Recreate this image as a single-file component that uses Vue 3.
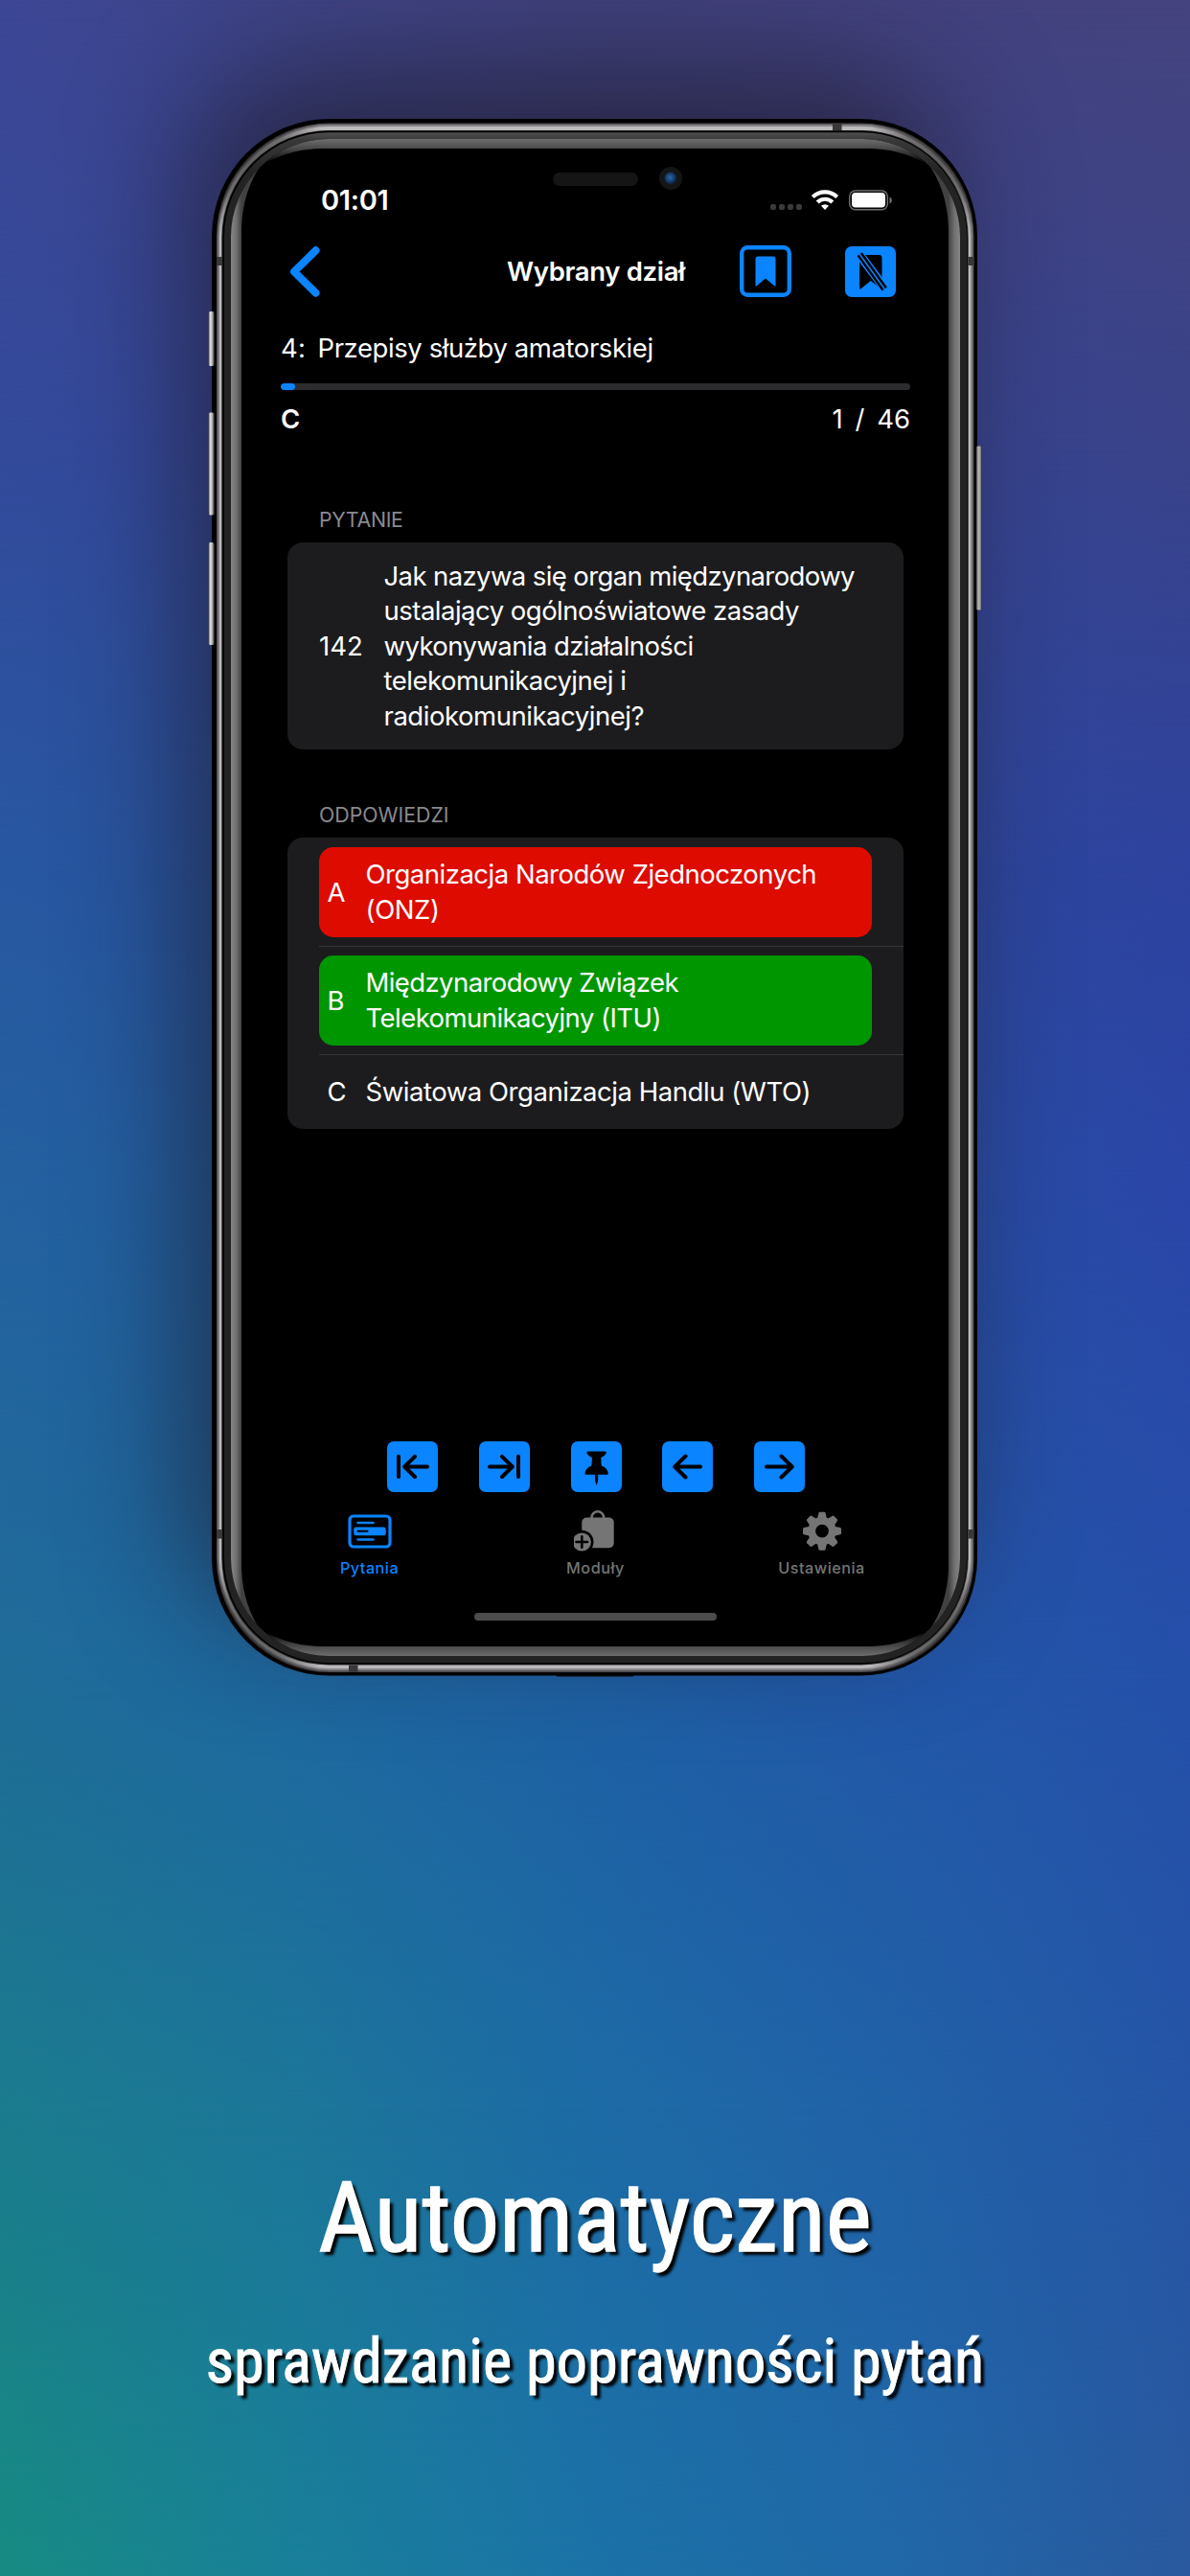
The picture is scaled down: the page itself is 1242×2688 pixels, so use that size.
<script setup>
const backdrop = [
  { y: 0, h: 1, stops: ['#3d4796', '#3f4486', '#40417c', '#43427f', '#44437f'] },
  { y: 0, h: 450, stops: ['#344a9b', '#35479a', '#354593', '#374491', '#3a4389'] },
  { y: 450, h: 450, stops: ['#2857a1', '#28539f', '#2a4b9e', '#2d479c', '#2e439f'] },
  { y: 900, h: 350, stops: ['#2461a0', '#215fa2', '#2458a2', '#284ea3', '#2a46a8'] },
  { y: 1250, h: 500, stops: ['#1f6c98', '#1e68a0', '#1e60a4', '#2257a8', '#2550aa'] },
  { y: 1750, h: 450, stops: ['#1b7b8e', '#1c7699', '#1d6ba6', '#2162a7', '#2555a6'] },
  { y: 2200, h: 488, stops: ['#178b82', '#19809a', '#1b72a7', '#2068a8', '#2a599e'] },
]

const question = [
  { text: 'Jak nazywa się organ międzynarodowy', track: -0.61 },
  { text: 'ustalający ogólnoświatowe zasady', track: -0.51 },
  { text: 'wykonywania działalności', track: -0.58 },
  { text: 'telekomunikacyjnej i', track: -0.5 },
  { text: 'radiokomunikacyjnej?', track: -0.46 },
]

const answers = [
  {
    key: 'A',
    state: 'wrong',
    lines: [
      { text: 'Organizacja Narodów Zjednoczonych', track: -0.49 },
      { text: '(ONZ)', track: -0.4 },
    ],
  },
  {
    key: 'B',
    state: 'right',
    lines: [
      { text: 'Międzynarodowy Związek', track: -0.59 },
      { text: 'Telekomunikacyjny (ITU)', track: -0.55 },
    ],
  },
  {
    key: 'C',
    state: 'idle',
    lines: [{ text: 'Światowa Organizacja Handlu (WTO)', track: -0.46 }],
  },
]

const track = (v) => ({ letterSpacing: v + 'px' })
const teeth = [0, 45, 90, 135, 180, 225, 270, 315]
</script>

<template>
  <div class="stage">
    <svg class="backdrop" viewBox="0 0 1242 2688" aria-hidden="true">
      <defs>
        <template v-for="(row, i) in backdrop" :key="'g' + i">
          <linearGradient :id="'row' + i" x1="0" x2="1" y1="0" y2="0">
            <stop v-for="(c, j) in row.stops" :key="j" :offset="j / 4" :stop-color="c" />
          </linearGradient>
          <linearGradient :id="'fade' + i" gradientUnits="userSpaceOnUse" x1="0" x2="0" :y1="row.y" :y2="row.y + row.h">
            <stop offset="0" stop-color="#fff" :stop-opacity="i ? 0 : 1" />
            <stop offset="1" stop-color="#fff" />
          </linearGradient>
          <mask :id="'mask' + i" maskUnits="userSpaceOnUse" x="0" y="0" width="1242" height="2688">
            <rect :y="row.y" width="1242" :height="2688 - row.y" :fill="`url(#fade${i})`" />
          </mask>
        </template>
      </defs>
      <rect
        v-for="(row, i) in backdrop"
        :key="i"
        :y="row.y"
        width="1242"
        :height="2688 - row.y"
        :fill="`url(#row${i})`"
        :mask="`url(#mask${i})`"
      />
    </svg>

    <div class="shadow"></div>

    <svg class="frame" viewBox="0 0 1242 1780" aria-hidden="true">
      <defs>
        <linearGradient id="keyL" x1="0" x2="1"><stop offset="0" stop-color="#444" /><stop offset=".3" stop-color="#ddd" /><stop offset=".6" stop-color="#bbb" /><stop offset="1" stop-color="#333" /></linearGradient>
        <linearGradient id="keyR" x1="0" x2="1"><stop offset="0" stop-color="#222" /><stop offset=".4" stop-color="#bbb" /><stop offset=".75" stop-color="#999" /><stop offset="1" stop-color="#222" /></linearGradient>
        <linearGradient id="sideL" gradientUnits="userSpaceOnUse" x1="241" x2="252" y1="0" y2="0"><stop offset="0" stop-color="#868686" /><stop offset=".5" stop-color="#707070" /><stop offset="1" stop-color="#414141" /></linearGradient>
        <linearGradient id="sideR" gradientUnits="userSpaceOnUse" x1="990" x2="1002" y1="0" y2="0"><stop offset="0" stop-color="#414141" /><stop offset=".5" stop-color="#707070" /><stop offset="1" stop-color="#868686" /></linearGradient>
        <linearGradient id="capT" gradientUnits="userSpaceOnUse" x1="0" x2="0" y1="145" y2="171"><stop offset="0" stop-color="#6e6e6e" /><stop offset=".38" stop-color="#4a4a4a" /><stop offset="1" stop-color="#000" /></linearGradient>
        <linearGradient id="capB" gradientUnits="userSpaceOnUse" x1="0" x2="0" y1="1702" y2="1728"><stop offset="0" stop-color="#000" /><stop offset=".62" stop-color="#4a4a4a" /><stop offset="1" stop-color="#6e6e6e" /></linearGradient>
        <linearGradient id="rim" gradientUnits="userSpaceOnUse" x1="0" x2="0" y1="138" y2="240"><stop offset="0" stop-color="#505050" /><stop offset=".08" stop-color="#383838" /><stop offset=".4" stop-color="#242424" /><stop offset="1" stop-color="#232323" /></linearGradient>
        <radialGradient id="dim"><stop offset="0" stop-color="#000" stop-opacity=".5" /><stop offset=".5" stop-color="#000" stop-opacity=".4" /><stop offset="1" stop-color="#000" stop-opacity="0" /></radialGradient>
        <radialGradient id="lens" cx=".45" cy=".45" r=".6"><stop offset="0" stop-color="#2a6aa8" /><stop offset=".55" stop-color="#173d6d" /><stop offset="1" stop-color="#08152c" /></radialGradient>
        <clipPath id="glass"><rect x="241" y="145" width="761" height="1583" rx="102" /></clipPath>
        <clipPath id="body"><rect x="221" y="124" width="799" height="1624.500" rx="123" /></clipPath>
      </defs>
      <rect x="580" y="1745" width="82" height="4.500" rx="2" fill="#111" />
      <rect x="221" y="124" width="799" height="1624.500" rx="123" fill="#000" />
      <rect x="217.500" y="325" width="6.200" height="57" rx="2" fill="url(#keyL)" />
      <rect x="217.500" y="430.500" width="6.200" height="107" rx="2" fill="url(#keyL)" />
      <rect x="217.500" y="566" width="6.200" height="107" rx="2" fill="url(#keyL)" />
      <rect x="1018.500" y="465.500" width="6.300" height="171" rx="2" fill="url(#keyR)" />
      <rect x="226" y="128.500" width="790.500" height="1616.500" rx="118" fill="#504e50" />
      <rect x="227.500" y="130" width="787.500" height="1613" rx="116" fill="#858385" />
      <rect x="229" y="132" width="784" height="1609" rx="114" fill="#bcb9bc" />
      <g clip-path="url(#body)" fill="url(#dim)">
        <circle cx="255" cy="164" r="85" />
        <circle cx="987" cy="164" r="85" />
        <circle cx="255" cy="1710" r="85" />
        <circle cx="987" cy="1710" r="85" />
      </g>
      <rect x="231.300" y="136" width="779.400" height="1601.500" rx="112" fill="#2a2a2a" />
      <rect x="232.300" y="136.500" width="777.400" height="1600" rx="111" fill="#000" />
      <rect x="234" y="138.300" width="775" height="1596.700" rx="109" fill="url(#rim)" />
      <g fill="#393738">
        <rect x="226" y="268" width="6" height="9" />
        <rect x="226" y="1596" width="6" height="9.500" />
        <rect x="1010.500" y="268" width="6" height="9" />
        <rect x="1010.500" y="1596" width="6" height="9.500" />
        <rect x="869" y="128.500" width="9.500" height="7.500" />
        <rect x="364" y="1737.500" width="9.500" height="7.500" />
      </g>
      <g clip-path="url(#glass)">
        <rect x="241" y="145" width="761" height="1583" fill="#000" />
        <path fill="url(#capT)" d="M250 130H992L966 170C945 160 928 155 905 155H338C315 155 297 160 276 170z" />
        <path fill="url(#capB)" d="M250 1743H992L966 1703C945 1713 928 1718 905 1718H338C315 1718 297 1713 276 1703z" />
        <path fill="url(#sideL)" d="M230 120H300L285 157C262 180 252 210 252 242V1632C252 1664 262 1694 285 1717L300 1750H230z" />
        <path fill="url(#sideR)" d="M1012 120H945L957 157C980 180 990 210 990 242V1632C990 1664 980 1694 957 1717L945 1750H1012z" />
      </g>
      <rect x="577" y="180" width="89" height="14" rx="7" fill="#151515" />
      <circle cx="700" cy="186" r="12" fill="#151515" />
      <circle cx="700" cy="186" r="6.500" fill="url(#lens)" />
    </svg>

    <main class="screen">
      <div class="status">
        <span class="time">01:01</span>
        <svg width="125" height="22" viewBox="806 198 125 22">
          <g fill="#3a3a3c"><rect x="804" y="213" width="6" height="6" rx="2" /><rect x="813" y="213" width="6" height="6" rx="2" /><rect x="822" y="213" width="6" height="6" rx="2" /><rect x="831" y="213" width="6" height="6" rx="2" /></g>
          <g fill="none" stroke="#fff" stroke-width="4.200"><path d="M848.300 205.600A18.200 18.200 0 0 1 873.700 205.600" /><path d="M853.200 211A11 11 0 0 1 868.800 211" /></g>
          <path fill="#fff" d="M857 214.700a6 6 0 0 1 8 0L861 218.900z" />
          <rect x="886.700" y="198.900" width="39.600" height="19.800" rx="6" fill="none" stroke="#6e6e70" stroke-width="1.500" />
          <rect x="889" y="201" width="35" height="15.500" rx="3.800" fill="#fff" />
          <path fill="#7a7a7c" d="M928.500 205.500c3 1.500 3 5.500 0 7z" />
        </svg>
      </div>

      <header class="bar">
        <div class="side back">
          <svg width="32" height="53" viewBox="0 0 32 53"><path d="M27.500 4.300L5 26.500 27.500 48.700" fill="none" stroke="#0b84ff" stroke-width="8" stroke-linecap="round" stroke-linejoin="round" /></svg>
        </div>
        <h1>Wybrany dział</h1>
        <div class="side actions">
          <svg width="54" height="54" viewBox="0 0 54 54">
            <rect x="2.200" y="2.200" width="49.600" height="49.600" rx="6" fill="none" stroke="#0b84ff" stroke-width="4.400" />
            <path fill="#0b84ff" d="M16.500 14.500a3 3 0 0 1 3-3h15a3 3 0 0 1 3 3V42q0 1-1 .4L27 34.500l-9.500 7.900q-1 .6-1-.4z" />
          </svg>
          <svg width="53" height="53" viewBox="0 0 53 53">
            <rect width="53" height="53" rx="7" fill="#0b84ff" />
            <path fill="#000" d="M15 12a3 3 0 0 1 3-3h17.500a3 3 0 0 1 3 3V43.500q0 1.500-1.200.5L26.800 36l-10.500 8.500q-1.300.8-1.300-1z" />
            <path d="M13.500 6.500L43 46" stroke="#0b84ff" stroke-width="9.500" />
            <path d="M15.200 8.200L41.200 44.700" stroke="#000" stroke-width="6.500" />
            <path d="M14 6.500L42.500 46.500" stroke="#0b84ff" stroke-width="1.500" />
          </svg>
        </div>
      </header>

      <section class="summary">
        <p class="chapter"><span class="num">4:</span><span>Przepisy służby amatorskiej</span></p>
        <div class="progress"><i></i></div>
        <p class="count"><b>C</b><span>1 / 46</span></p>
      </section>

      <h2 class="label first">PYTANIE</h2>
      <section class="card question">
        <span class="qnum">142</span>
        <p><span v-for="l in question" :key="l.text" class="line" :style="track(l.track)">{{ l.text }}</span></p>
      </section>

      <h2 class="label second">ODPOWIEDZI</h2>
      <section class="card answers">
        <div v-for="a in answers" :key="a.key" class="row">
          <div class="answer" :class="a.state">
            <span class="key">{{ a.key }}</span>
            <p><span v-for="l in a.lines" :key="l.text" class="line" :style="track(l.track)">{{ l.text }}</span></p>
          </div>
        </div>
      </section>

      <nav class="tools">
        <svg viewBox="0 0 53 53"><rect width="53" height="53" rx="7" /><path d="M12 15.800V37M42 26.500H18.500M29 15.800L18.300 26.500 29 37" /></svg>
        <svg viewBox="0 0 53 53"><rect width="53" height="53" rx="7" /><path d="M41 15.800V37M11 26.500H34.500M24 15.800L34.700 26.500 24 37" /></svg>
        <svg viewBox="0 0 53 53"><rect width="53" height="53" rx="7" /><path class="solid" d="M18 10.500H35Q37.500 10.500 36.500 12.800Q35 15.500 31.200 17.200L31.800 25.500Q38 27.500 38.700 33.500Q38.700 34.800 37.500 34.800H28.300L28 41.500L26.600 46L25.200 41.500L24.900 34.800H15.700Q14.500 34.800 14.500 33.500Q15.200 27.500 21.400 25.500L22 17.200Q18.200 15.500 16.700 12.800Q15.700 10.500 18 10.500z" /></svg>
        <svg viewBox="0 0 53 53"><rect width="53" height="53" rx="7" /><path d="M40 26.500H13.500M24.500 15.500L13.300 26.500 24.500 37.500" /></svg>
        <svg viewBox="0 0 53 53"><rect width="53" height="53" rx="7" /><path d="M13 26.500H39.500M28.500 15.500L39.700 26.500 28.500 37.500" /></svg>
      </nav>

      <nav class="tabs">
        <div class="tab active">
          <svg width="46" height="46" viewBox="0 0 46 46">
            <rect x="2" y="7" width="42" height="32" rx="4" fill="none" stroke="currentColor" stroke-width="3.200" />
            <path d="M10.500 14H26.500M10.500 31.400H26.500" stroke="currentColor" stroke-width="2.500" stroke-linecap="round" />
            <rect x="6.200" y="18.600" width="33.500" height="8.600" rx="2.500" fill="currentColor" />
            <path d="M10.500 22.800H20.500" stroke="#000" stroke-width="2" stroke-linecap="round" />
          </svg>
          <span>Pytania</span>
        </div>
        <div class="tab">
          <svg width="46" height="46" viewBox="0 0 46 46">
            <path d="M18.500 9.500V8.500a6.300 6.300 0 0 1 12.600 0V9.500" fill="none" stroke="currentColor" stroke-width="2.600" />
            <rect x="8.300" y="8.500" width="33.400" height="31.800" rx="5" fill="currentColor" />
            <circle cx="8.300" cy="34" r="12.200" fill="#000" />
            <circle cx="8.300" cy="34" r="9.600" fill="currentColor" />
            <path d="M2.500 34H14.100M8.300 28.200V39.800" stroke="#000" stroke-width="2.600" stroke-linecap="round" />
          </svg>
          <span>Moduły</span>
        </div>
        <div class="tab">
          <svg width="46" height="46" viewBox="0 0 46 46">
            <g transform="translate(23 22.700)" fill="currentColor">
              <circle r="10.800" fill="none" stroke="currentColor" stroke-width="7.800" />
              <path v-for="t in teeth" :key="t" d="M-5 -12.500L-3.600 -19Q-3.300 -20 -2.300 -20H2.300Q3.300 -20 3.600 -19L5 -12.500z" :transform="`rotate(${t})`" />
            </g>
          </svg>
          <span>Ustawienia</span>
        </div>
      </nav>
      <div class="home"></div>
    </main>

    <footer class="caption">
      <p class="title">Automatyczne</p>
      <p class="sub">sprawdzanie poprawności pytań</p>
    </footer>
  </div>
</template>

<style>
body { margin: 0; background: #2458a2; }
</style>

<style scoped>
.stage {
  position: relative;
  width: 1242px;
  height: 2688px;
  overflow: hidden;
  box-sizing: border-box;
  padding-top: 155px;
  font: 400 27.5px/36.5px Inter, sans-serif;
  color: #fff;
}
p, h1, h2 { margin: 0; font: inherit; }
.backdrop { position: absolute; left: 0; top: 0; width: 1242px; height: 2688px; }
.frame { position: absolute; left: 0; top: 0; width: 1242px; height: 1780px; }
.shadow {
  position: absolute;
  left: 221px;
  top: 124px;
  width: 799px;
  height: 1624px;
  border-radius: 123px;
  box-shadow: -28px -52px 120px 0 rgba(30, 25, 35, 0.62);
}
.screen {
  position: relative;
  width: 738px;
  height: 1563px;
  margin-left: 252px;
  display: flex;
  flex-direction: column;
}
.status {
  display: flex;
  justify-content: space-between;
  align-items: flex-start;
  box-sizing: border-box;
  height: 95px;
  padding: 38.500px 59px 0 83px;
}
.status svg { margin-top: 4.500px; overflow: visible; }
.time { font-size: 29px; line-height: 30px; font-weight: 600; letter-spacing: -0.3px; }
.bar {
  display: grid;
  grid-template-columns: 1fr auto 1fr;
  align-items: center;
  height: 66px;
  margin-left: 2px;
}
.bar h1 { font-weight: 600; letter-spacing: -0.34px; line-height: 36px; }
.side { display: flex; align-items: center; }
.back { padding-left: 48px; }
.actions { justify-content: flex-end; gap: 56px; padding-right: 55.500px; }
.summary { padding: 28.500px 40px 0 41px; }
.summary p { display: flex; line-height: 37px; }
.chapter { letter-spacing: -0.42px; }
.num { width: 38.500px; letter-spacing: 0.2px; }
.progress { height: 7px; margin: 18.500px 0 11.500px; border-radius: 3.500px; background: #2c2c2e; overflow: hidden; }
.progress i { display: block; width: 15px; height: 7px; border-radius: 3.500px; background: #0b84ff; }
.count { justify-content: space-between; }
.count b { font-weight: 600; }
.count span { word-spacing: 5px; }
.label { margin-left: 81px; font-size: 21.300px; line-height: 30px; color: #8a898f; }
.first { margin-top: 71.800px; letter-spacing: -0.3px; }
.second { margin-top: 53.300px; }
.card { margin: 8.700px 47px 0 48px; border-radius: 16px; background: #1c1c1e; }
.question { display: flex; align-items: center; box-sizing: border-box; height: 216px; padding-left: 33px; }
.qnum { width: 67.500px; }
.line { display: block; white-space: nowrap; }
.answers { overflow: hidden; height: 304px; }
.row { position: relative; padding: 10px 33px 9px; }
.row + .row::before {
  content: '';
  position: absolute;
  left: 33px;
  right: 0;
  top: 0;
  height: 1px;
  background: #353538;
}
.answer {
  display: flex;
  align-items: center;
  box-sizing: border-box;
  height: 94px;
  padding-left: 8.500px;
  border-radius: 15px;
}
.wrong { background: #dd0b00; }
.right { background: #009600; }
.idle { height: 58px; }
.key { width: 40px; }
.tools { display: flex; justify-content: center; gap: 42.700px; margin-top: auto; padding-left: 2px; }
.tools svg { width: 53px; height: 53px; }
.tools rect { fill: #0b84ff; }
.tools path { fill: none; stroke: #000; stroke-width: 4; stroke-linecap: round; stroke-linejoin: round; }
.tools .solid { fill: #000; stroke: none; }
.tabs { display: flex; justify-content: center; margin-top: 18px; padding-left: 1px; }
.tab { display: flex; flex-direction: column; align-items: center; width: 236px; color: #757575; font-size: 16.200px; font-weight: 500; line-height: 24px; letter-spacing: 0.5px; }
.tab span { margin-top: 3px; }
.active { color: #0b84ff; }
.home { width: 253px; height: 8px; margin: 35px auto 27px; border-radius: 4px; background: #4c4c4c; }
.caption {
  position: relative;
  margin-top: 526px;
  display: flex;
  flex-direction: column;
  align-items: center;
  font-family: 'Roboto Condensed', Roboto, sans-serif;
  text-align: center;
  text-shadow: 4px 4px 3px #000;
}
.caption p { font-stretch: 75%; font-weight: 400; }
.caption .title { font-size: 102.500px; line-height: 140px; -webkit-text-stroke: 1.300px #fff; }
.caption .sub { font-size: 64.400px; line-height: 80px; margin-top: 39.500px; -webkit-text-stroke: 0.900px #fff; }
</style>
